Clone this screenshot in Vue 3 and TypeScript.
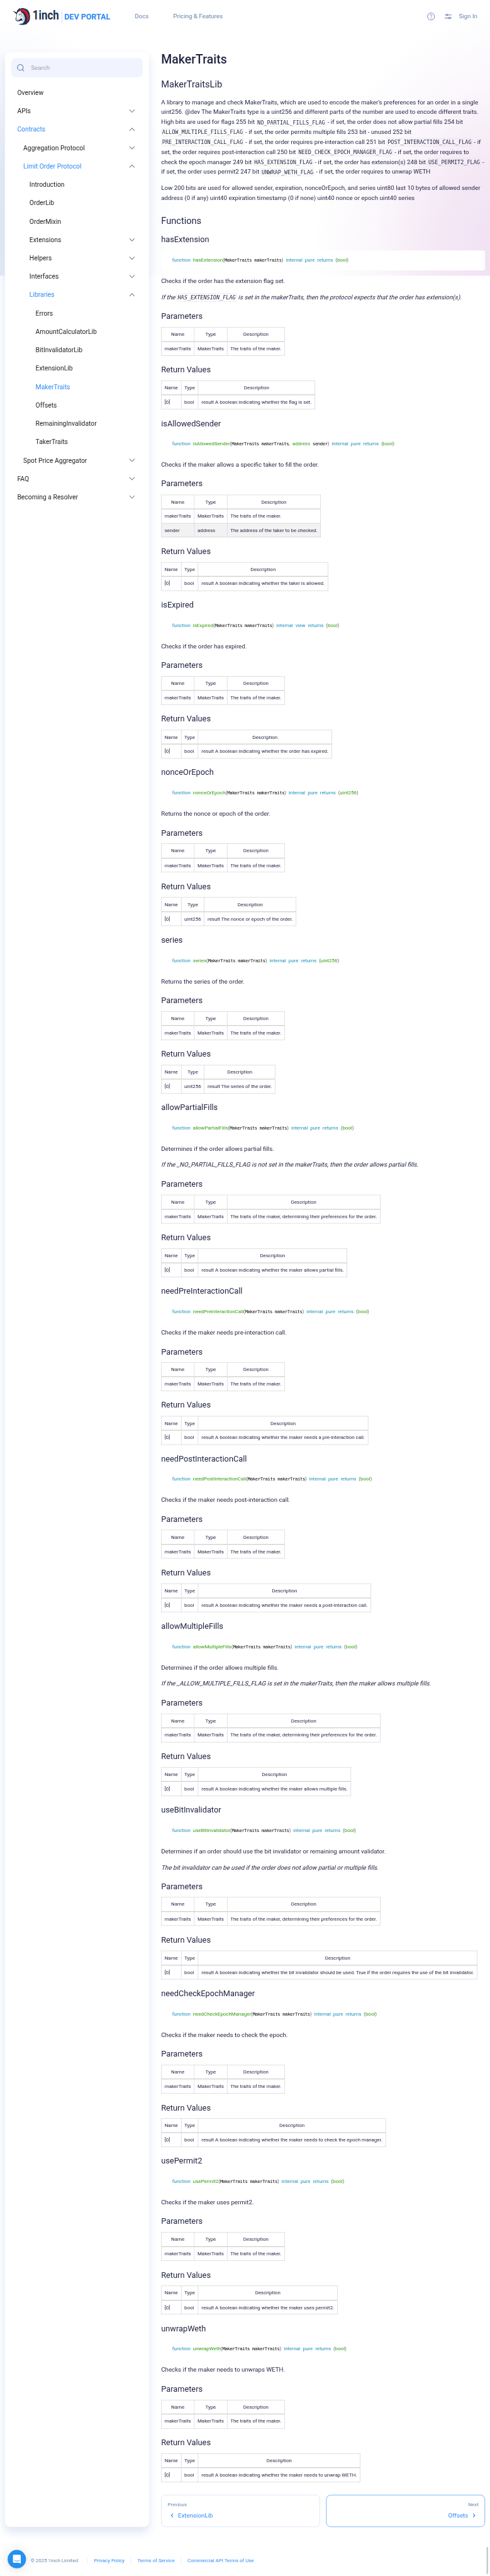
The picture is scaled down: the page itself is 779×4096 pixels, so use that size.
<script setup lang="ts">
interface NavItem {
  label: string
  level: number
  state?: 'open' | 'closed'
  active?: boolean
}

interface Row {
  name: string
  type: string
  text: string
}

interface Fn {
  name: string
  mutability: string
  returns: string
  summary: string
  note?: string
  flag?: string
  noteEnd?: string
  sender?: boolean
  params: Row[]
  result: string
}

const nav: NavItem[] = [
  { label: 'Overview', level: 0 },
  { label: 'APIs', level: 0, state: 'closed' },
  { label: 'Contracts', level: 0, state: 'open', active: true },
  { label: 'Aggregation Protocol', level: 1, state: 'closed' },
  { label: 'Limit Order Protocol', level: 1, state: 'open', active: true },
  { label: 'Introduction', level: 2 },
  { label: 'OrderLib', level: 2 },
  { label: 'OrderMixin', level: 2 },
  { label: 'Extensions', level: 2, state: 'closed' },
  { label: 'Helpers', level: 2, state: 'closed' },
  { label: 'Interfaces', level: 2, state: 'closed' },
  { label: 'Libraries', level: 2, state: 'open', active: true },
  { label: 'Errors', level: 3 },
  { label: 'AmountCalculatorLib', level: 3 },
  { label: 'BitInvalidatorLib', level: 3 },
  { label: 'ExtensionLib', level: 3 },
  { label: 'MakerTraits', level: 3, active: true },
  { label: 'Offsets', level: 3 },
  { label: 'RemainingInvalidator', level: 3 },
  { label: 'TakerTraits', level: 3 },
  { label: 'Spot Price Aggregator', level: 1, state: 'closed' },
  { label: 'FAQ', level: 0, state: 'closed' },
  { label: 'Becoming a Resolver', level: 0, state: 'closed' },
]

const maker: Row = { name: 'makerTraits', type: 'MakerTraits', text: 'The traits of the maker.' }
const makerPrefs: Row = {
  name: 'makerTraits',
  type: 'MakerTraits',
  text: 'The traits of the maker, determining their preferences for the order.',
}

const fns: Fn[] = [
  {
    name: 'hasExtension', mutability: 'pure', returns: 'bool',
    summary: 'Checks if the order has the extension flag set.',
    note: 'If the ', flag: 'HAS_EXTENSION_FLAG',
    noteEnd: ' is set in the makerTraits, then the protocol expects that the order has extension(s).',
    params: [maker], result: 'result A boolean indicating whether the flag is set.',
  },
  {
    name: 'isAllowedSender', mutability: 'pure', returns: 'bool', sender: true,
    summary: 'Checks if the maker allows a specific taker to fill the order.',
    params: [maker, { name: 'sender', type: 'address', text: 'The address of the taker to be checked.' }],
    result: 'result A boolean indicating whether the taker is allowed.',
  },
  {
    name: 'isExpired', mutability: 'view', returns: 'bool',
    summary: 'Checks if the order has expired.',
    params: [maker], result: 'result A boolean indicating whether the order has expired.',
  },
  {
    name: 'nonceOrEpoch', mutability: 'pure', returns: 'uint256',
    summary: 'Returns the nonce or epoch of the order.',
    params: [maker], result: 'result The nonce or epoch of the order.',
  },
  {
    name: 'series', mutability: 'pure', returns: 'uint256',
    summary: 'Returns the series of the order.',
    params: [maker], result: 'result The series of the order.',
  },
  {
    name: 'allowPartialFills', mutability: 'pure', returns: 'bool',
    summary: 'Determines if the order allows partial fills.',
    note: 'If the _NO_PARTIAL_FILLS_FLAG is not set in the makerTraits, then the order allows partial fills.',
    params: [makerPrefs], result: 'result A boolean indicating whether the maker allows partial fills.',
  },
  {
    name: 'needPreInteractionCall', mutability: 'pure', returns: 'bool',
    summary: 'Checks if the maker needs pre-interaction call.',
    params: [maker], result: 'result A boolean indicating whether the maker needs a pre-interaction call.',
  },
  {
    name: 'needPostInteractionCall', mutability: 'pure', returns: 'bool',
    summary: 'Checks if the maker needs post-interaction call.',
    params: [maker], result: 'result A boolean indicating whether the maker needs a post-interaction call.',
  },
  {
    name: 'allowMultipleFills', mutability: 'pure', returns: 'bool',
    summary: 'Determines if the order allows multiple fills.',
    note: 'If the _ALLOW_MULTIPLE_FILLS_FLAG is set in the makerTraits, then the maker allows multiple fills.',
    params: [makerPrefs], result: 'result A boolean indicating whether the maker allows multiple fills.',
  },
  {
    name: 'useBitInvalidator', mutability: 'pure', returns: 'bool',
    summary: 'Determines if an order should use the bit invalidator or remaining amount validator.',
    note: 'The bit invalidator can be used if the order does not allow partial or multiple fills.',
    params: [makerPrefs],
    result: 'result A boolean indicating whether the bit invalidator should be used. True if the order requires the use of the bit invalidator.',
  },
  {
    name: 'needCheckEpochManager', mutability: 'pure', returns: 'bool',
    summary: 'Checks if the maker needs to check the epoch.',
    params: [maker], result: 'result A boolean indicating whether the maker needs to check the epoch manager.',
  },
  {
    name: 'usePermit2', mutability: 'pure', returns: 'bool',
    summary: 'Checks if the maker uses permit2.',
    params: [maker], result: 'result A boolean indicating whether the maker uses permit2.',
  },
  {
    name: 'unwrapWeth', mutability: 'pure', returns: 'bool',
    summary: 'Checks if the maker needs to unwraps WETH.',
    params: [maker], result: 'result A boolean indicating whether the maker needs to unwrap WETH.',
  },
]
</script>

<template>
  <div class="viewport">
    <div class="page">
      <header class="top">
        <svg class="logo" viewBox="0 0 260 60" width="260" height="60">
          <g transform="translate(-.7 -.2) scale(.3333)">
            <path d="M2 46 L38 60 L32 72Z" fill="#1b314f" />
            <path d="M34 56 C36 40 48 30 62 26 L60 32 C72 22 88 24 94 28 C120 30 139 56 138 90 C140 112 132 138 114 146 L108 154 L98 152 L92 156 C74 158 58 154 48 150 C70 150 84 142 88 128 L70 122 C58 128 40 132 30 124 C22 116 26 100 32 90Z" fill="#1b314f" />
            <path d="M64 34 C98 28 124 52 128 84 C131 108 124 128 112 142 C119 120 118 98 110 82 C100 60 86 48 60 42Z" fill="#d81f26" />
            <path d="M50 38 C60 38 66 42 72 46 L56 46 L46 52Z" fill="#d81f26" />
            <path d="M38 64 C44 52 56 50 66 46 L68 58 C84 64 96 82 98 104 C98 128 88 142 72 148 C80 134 82 118 74 106 C64 102 60 114 48 122 C38 128 28 120 30 110 C34 96 36 80 38 64Z" fill="#fff" />
            <path d="M70 62 C88 74 98 94 97 112 C94 132 86 142 74 147 C84 132 86 112 78 98 C70 88 66 80 70 62Z" fill="#c5cde0" />
            <path d="M48 86 C58 82 66 74 68 64 C72 82 66 96 56 106 C52 110 48 116 40 116" fill="none" stroke="#8f9bb8" stroke-width="4" />
            <path d="M50 74 L62 68 L60 75 L52 79Z" fill="#ffc700" stroke="#1b314f" stroke-width="2" />
            <path d="M34 110 l5 3 M38 122 l10 -4" stroke="#1b314f" stroke-width="3" />
          </g>
          <text x="52" y="37.8" class="word" textLength="69" lengthAdjust="spacingAndGlyphs">1inch</text>
          <path d="M128.5 15V46" stroke="#a9cbf7" stroke-width="1" />
          <text x="135" y="37.5" class="sub" textLength="120" lengthAdjust="spacingAndGlyphs">DEV PORTAL</text>
        </svg>
        <a class="link docs">Docs</a>
        <a class="link">Pricing &amp; Features</a>
        <div class="tools">
          <svg width="22" height="22" viewBox="0 0 22 22" fill="none" stroke="#6c86ad" stroke-width="1.6">
            <circle cx="11" cy="11" r="9.2" />
            <path d="M8.4 8.8C8.4 5.3 13.6 5.3 13.6 8.7C13.6 10.6 11 10.8 11 13" />
            <path d="M11 14.4V16.2" />
          </svg>
          <svg width="20" height="20" viewBox="0 0 20 20" fill="none" stroke="#6c86ad" stroke-width="2">
            <path d="M1 6H5M9 6H19M1 14H11M15 14H19" />
            <circle cx="7" cy="6" r="2" />
            <circle cx="13" cy="14" r="2" />
          </svg>
          <a class="link">Sign In</a>
        </div>
      </header>

      <div class="body">
        <aside class="side">
          <div class="search">
            <svg width="20" height="20" viewBox="0 0 20 20" fill="none" stroke="#6c86ad" stroke-width="2" stroke-linecap="round">
              <circle cx="9" cy="9" r="7.4" />
              <path d="M14 14L18 18.4" />
            </svg>
            <span>Search</span>
          </div>
          <ul class="menu">
            <li v-for="item in nav" :key="item.label" :class="['lv' + item.level, { on: item.active }]">
              <span>{{ item.label }}</span>
              <svg v-if="item.state" :class="item.state" width="16" height="10" viewBox="0 0 16 10" fill="none" stroke="#808080" stroke-width="1.8">
                <path d="M1.5 1.5L8 8.2L14.5 1.5" />
              </svg>
            </li>
          </ul>
        </aside>

        <main class="main">
          <h1>MakerTraits</h1>
          <h2>MakerTraitsLib</h2>
          <p>
            A library to manage and check MakerTraits, which are used to encode the maker's preferences for an order in a single uint256. @dev The MakerTraits type is a uint256 and different parts of the number are used to encode different traits. High bits are used for flags 255 bit <code>NO_PARTIAL_FILLS_FLAG</code> - if set, the order does not allow partial fills 254 bit <code>ALLOW_MULTIPLE_FILLS_FLAG</code> - if set, the order permits multiple fills 253 bit - unused 252 bit <code>PRE_INTERACTION_CALL_FLAG</code> - if set, the order requires pre-interaction call 251 bit <code>POST_INTERACTION_CALL_FLAG</code> - if set, the order requires post-interaction call 250 bit <code>NEED_CHECK_EPOCH_MANAGER_FLAG</code> - if set, the order requires to check the epoch manager 249 bit <code>HAS_EXTENSION_FLAG</code> - if set, the order has extension(s) 248 bit <code>USE_PERMIT2_FLAG</code> - if set, the order uses permit2 247 bit <code>UNWRAP_WETH_FLAG</code> - if set, the order requires to unwrap WETH
          </p>
          <p>
            Low 200 bits are used for allowed sender, expiration, nonceOrEpoch, and series uint80 last 10 bytes of allowed sender address (0 if any) uint40 expiration timestamp (0 if none) uint40 nonce or epoch uint40 series
          </p>
          <h2 class="functions">Functions</h2>

          <section v-for="fn in fns" :key="fn.name">
            <h3>{{ fn.name }}</h3>
            <pre><b>function</b> <i>{{ fn.name }}</i><u>(</u>MakerTraits makerTraits<template v-if="fn.sender"><u>,</u> <i>address</i> sender</template><u>)</u> <b>internal</b> <b>{{ fn.mutability }}</b> <b>returns</b> <u>(</u><i>{{ fn.returns }}</i><u>)</u></pre>
            <p>{{ fn.summary }}</p>
            <p v-if="fn.note" class="note"><span>{{ fn.note }}</span><code v-if="fn.flag">{{ fn.flag }}</code><span v-if="fn.noteEnd">{{ fn.noteEnd }}</span></p>
            <h3>Parameters</h3>
            <table>
              <thead>
                <tr><th>Name</th><th>Type</th><th>Description</th></tr>
              </thead>
              <tbody>
                <tr v-for="row in fn.params" :key="row.name">
                  <td>{{ row.name }}</td><td>{{ row.type }}</td><td>{{ row.text }}</td>
                </tr>
              </tbody>
            </table>
            <h3>Return Values</h3>
            <table>
              <thead>
                <tr><th>Name</th><th>Type</th><th>Description</th></tr>
              </thead>
              <tbody>
                <tr><td>[0]</td><td>{{ fn.returns }}</td><td>{{ fn.result }}</td></tr>
              </tbody>
            </table>
          </section>

          <nav class="pager">
            <a class="card">
              <small>Previous</small>
              <span>
                <svg width="7" height="12" viewBox="0 0 7 12" fill="none" stroke="#2f8af5" stroke-width="2"><path d="M5.8 1.2L1.6 6L5.8 10.8" /></svg>
                ExtensionLib
              </span>
            </a>
            <a class="card next">
              <small>Next</small>
              <span>
                Offsets
                <svg width="7" height="12" viewBox="0 0 7 12" fill="none" stroke="#2f8af5" stroke-width="2"><path d="M1.2 1.2L5.4 6L1.2 10.8" /></svg>
              </span>
            </a>
          </nav>
        </main>
      </div>

      <footer class="foot">
        <div class="chat">
          <svg width="24" height="26" viewBox="0 0 24 26">
            <path d="M4 1.5H20a2.2 2.2 0 0 1 2.2 2.2V25L17.5 22.4H4A2.2 2.2 0 0 1 1.8 20.2V3.7A2.2 2.2 0 0 1 4 1.5Z" fill="#fff" />
            <path d="M5.4 15.8C9.2 19 14.8 19 18.6 15.8" fill="none" stroke="#2490ef" stroke-width="1.6" stroke-linecap="round" />
          </svg>
        </div>
        <span class="copy">© 2025 1inch Limited</span>
        <a>Privacy Policy</a>
        <a>Terms of Service</a>
        <a>Commercial API Terms of Use</a>
        <div class="thumb"></div>
      </footer>
    </div>
  </div>
</template>

<style>
body {
  margin: 0;
  background: #fff;
}
</style>

<style scoped>
.viewport {
  width: 779px;
  height: 4096px;
  overflow: hidden;
}
.page {
  display: flex;
  flex-direction: column;
  box-sizing: border-box;
  width: 1280px;
  height: 6727px;
  transform: scale(0.60859, 0.60889);
  transform-origin: 0 0;
  font-family: Roboto, "Liberation Sans", sans-serif;
  font-size: 16px;
  line-height: 26px;
  color: #1e2140;
  background:
    radial-gradient(ellipse 520px 640px at 1340px 660px, #efdff3 0%, #f4e8f5 38%, #fbf7fc 70%, rgba(255, 255, 255, 0) 100%) 0 0 / 1280px 720px no-repeat,
    radial-gradient(ellipse 500px 560px at -30px 600px, #dae5f2 0%, #e2e7f5 30%, #f3f6fc 62%, rgba(255, 255, 255, 0) 100%) 0 0 / 1280px 720px no-repeat,
    #fff;
}
.top {
  display: flex;
  align-items: center;
  height: 86px;
  padding: 0 33px;
}
.logo {
  flex: none;
}
.word {
  font: 700 33px Roboto, sans-serif;
  fill: #1b314f;
}
.sub {
  font: 700 21.5px Roboto, sans-serif;
  fill: #2f8af5;
}
.link {
  color: #6c86ad;
}
.docs {
  margin: 0 64px 0 59px;
}
.tools {
  display: flex;
  align-items: center;
  gap: 24px;
  margin-left: auto;
}
.tools .link {
  margin-left: -6px;
}
.body {
  display: flex;
  gap: 32px;
  height: 6463px;
  margin-top: 50px;
  padding: 0 13px;
}
.side {
  box-sizing: border-box;
  flex: none;
  width: 376px;
  padding: 16px;
  border-radius: 14px;
  background: #fff;
  box-shadow: 0 12px 24px #dde6f4;
}
.search {
  display: flex;
  align-items: center;
  gap: 17px;
  height: 50px;
  padding: 0 15px;
  border-radius: 12px;
  background: #f1f4fe;
  color: #9b9fa8;
}
.menu {
  margin: 16px 0 0;
  padding: 0;
  list-style: none;
}
.menu li {
  display: flex;
  align-items: center;
  justify-content: space-between;
  height: 48px;
  padding-right: 20px;
  font-size: 17px;
  color: #222;
}
.menu .lv0 { padding-left: 16px; }
.menu .lv1 { padding-left: 32px; }
.menu .lv2 { padding-left: 48px; }
.menu .lv3 { padding-left: 64px; }
.menu .on { color: #2f8af5; }
.open { transform: rotate(180deg); }
.main {
  display: flex;
  flex-direction: column;
  flex: none;
  width: 846px;
}
h1, h2, h3 {
  margin: 0;
  font-weight: 400;
}
h1 {
  margin: -1px 0 29.5px;
  font-size: 32px;
  line-height: 40px;
  font-weight: 500;
}
h2 {
  margin-bottom: 19px;
  font-size: 24px;
  line-height: 30px;
}
h2.functions {
  margin: 15.5px 0 22px;
}
h3 {
  margin-bottom: 15px;
  font-size: 21px;
  line-height: 26.25px;
}
p {
  margin: 0 0 16px;
}
p + h3 {
  margin-top: 23.6px;
}
section p:has(+ h3) {
  margin-bottom: 0;
}
.note {
  height: 26px;
  white-space: pre;
}
/* Slants the upright face, which keeps its advance widths */
.note span {
  display: inline-block;
  transform: skewX(-14deg);
  transform-origin: 0 71%;
}
.note code {
  font-style: italic;
}
code {
  padding: 1.6px;
  border: 1px solid #e0e0e4;
  border-radius: 5px;
  font: 14px/16px "DejaVu Sans Mono", monospace;
  vertical-align: middle;
}
pre {
  height: 51.5px;
  margin: 0 0 15.5px;
  padding: 0 29px;
  border-radius: 5px;
  background: #fff;
  color: #000;
  font: 12px/51.5px "DejaVu Sans Mono", monospace;
  letter-spacing: -0.725px;
}
pre b, pre i, pre u {
  font: 13px Roboto, sans-serif;
  letter-spacing: 0;
  text-decoration: none;
}
pre b { color: #1990b8; }
pre i { color: #2f9c0a; }
pre u { color: #5f6364; }
table {
  margin: 0 0 23.6px;
  border-collapse: collapse;
  font-size: 13px;
  line-height: 19.5px;
}
table tr:nth-child(2) {
  background: #f2f2f2;
}
th, td {
  padding: 8px;
  border: 1px solid #cdcdcd;
  font-weight: 400;
  white-space: nowrap;
}
thead th {
  border-bottom-width: 2px;
}
.pager {
  display: flex;
  gap: 16px;
  margin-top: auto;
}
.card {
  display: flex;
  flex-direction: column;
  box-sizing: border-box;
  flex: 1;
  height: 84px;
  padding: 14px 16px;
  border: 1px solid #c9d8f2;
  border-radius: 12px;
  color: #2f8af5;
}
.card small {
  font-size: 13px;
  line-height: 20px;
  color: #6c86ad;
}
.card span {
  display: flex;
  align-items: center;
  gap: 12px;
  margin-top: 6px;
  padding: 0 8px;
}
.next {
  align-items: flex-end;
  border-color: #2f8af5;
}
.foot {
  position: relative;
  display: flex;
  align-items: center;
  height: 128px;
  padding: 48px 20px 0;
  box-sizing: border-box;
  font-size: 13px;
  line-height: 16px;
  color: #2f8af5;
}
.foot a {
  padding: 0 16px 0 16.5px;
  border-left: 1px solid #dfe3ea;
}
.copy {
  padding: 0 24px 0 12px;
  color: #6c86ad;
}
.chat {
  display: flex;
  align-items: center;
  justify-content: center;
  width: 48px;
  height: 48px;
  margin-top: -8px;
  border-radius: 50%;
  background: #2490ef;
  box-shadow: 0 1px 6px rgba(0, 0, 0, 0.08), 0 2px 32px rgba(0, 0, 0, 0.12);
}
.thumb {
  position: absolute;
  right: 5px;
  top: 52px;
  width: 4px;
  height: 71px;
  border-radius: 2px;
  background: #c6c9d0;
}
</style>
